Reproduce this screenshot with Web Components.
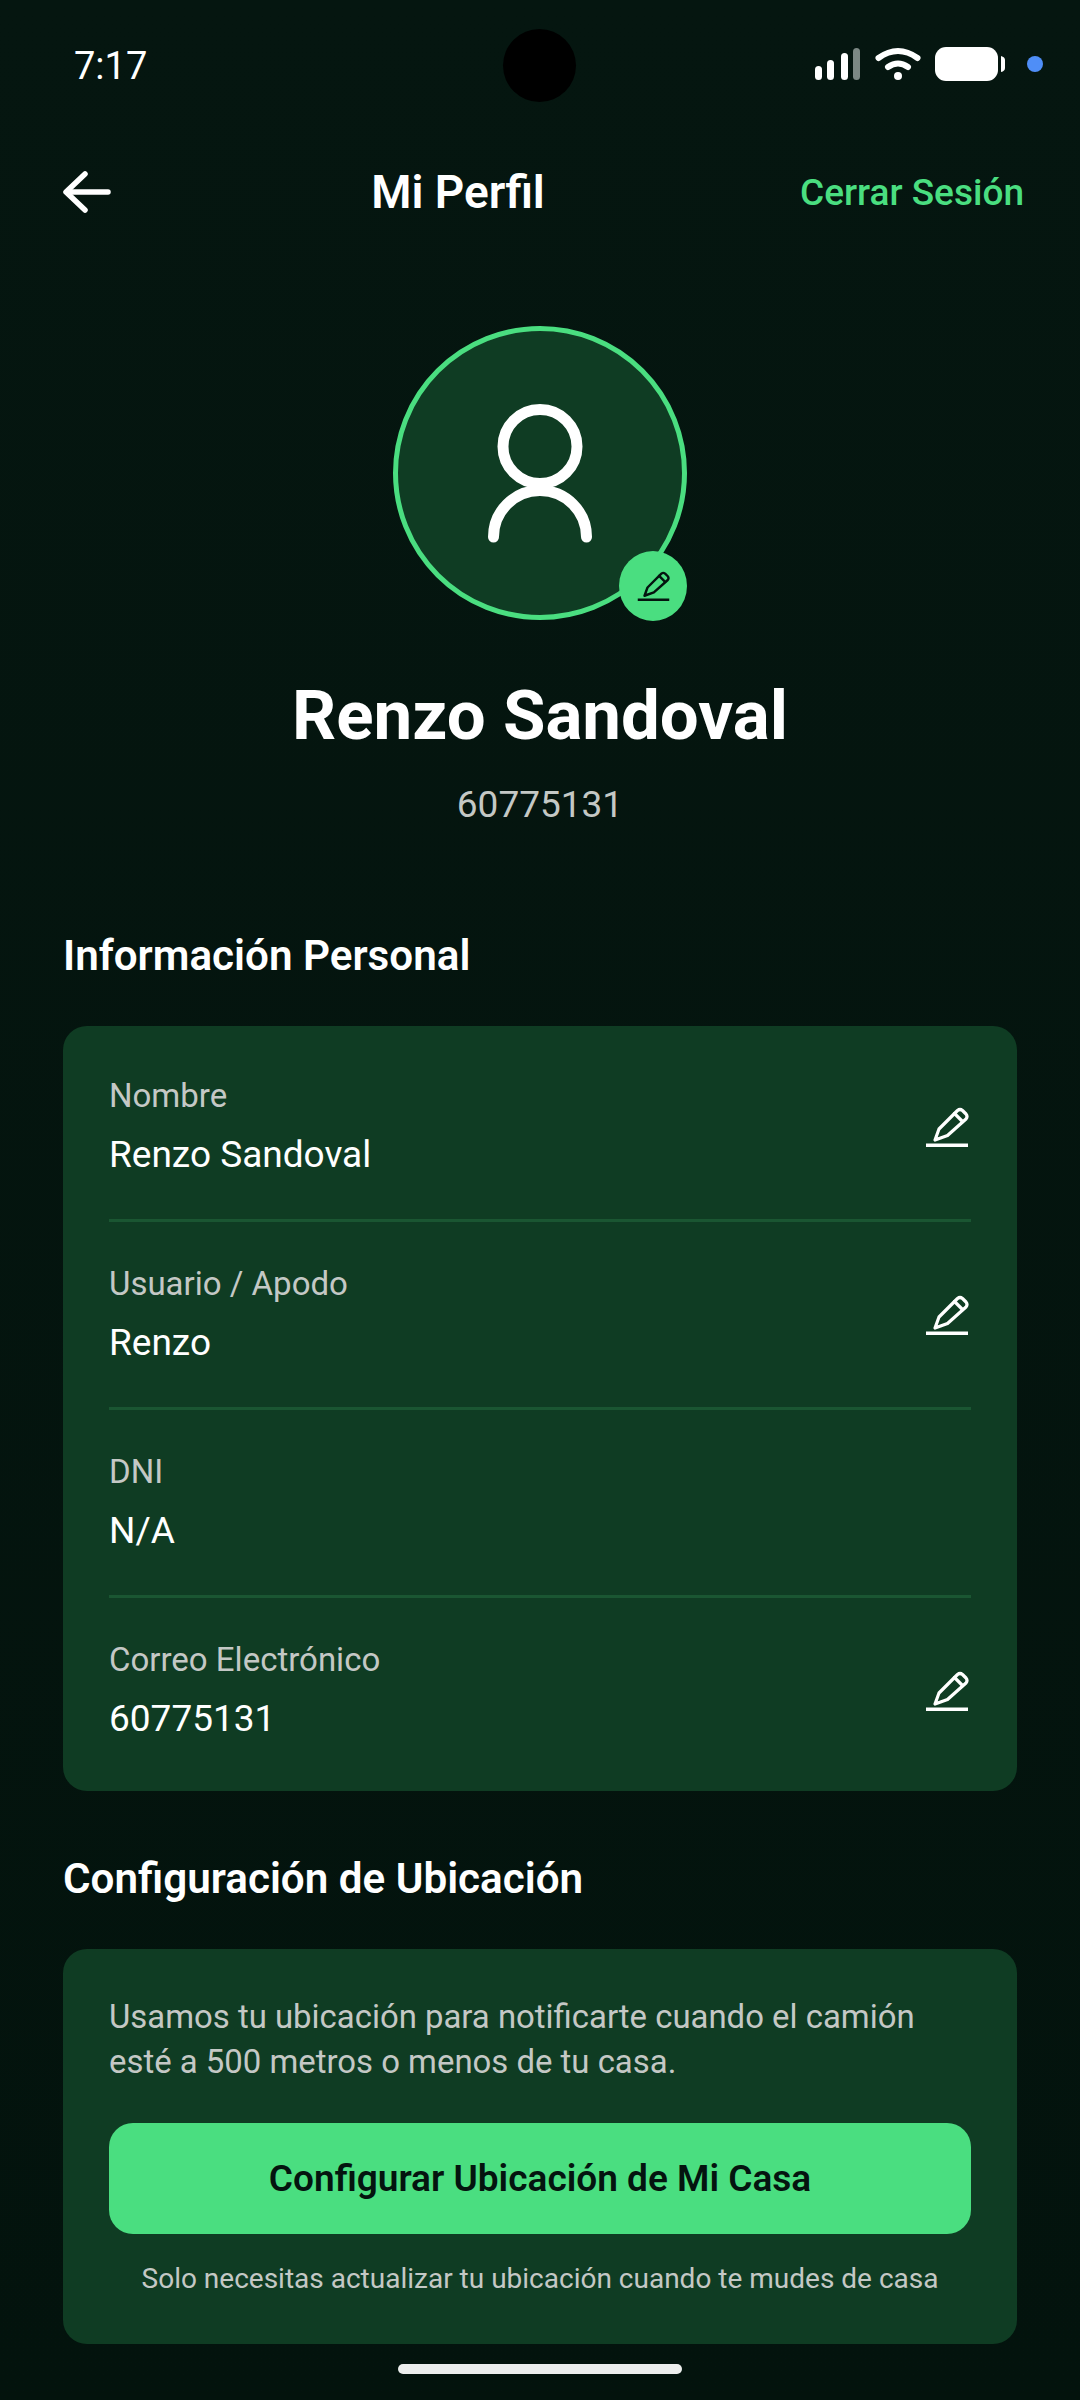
<!DOCTYPE html>
<html lang="es">
<head>
<meta charset="utf-8">
<title>Mi Perfil</title>
<style>
  html, body { margin: 0; padding: 0; background: #04140f; }
  body { font-family: Roboto, "Noto Sans", sans-serif; color: #fff; }
</style>
</head>
<body>
<x-profile-page>
  <x-status-bar time="7:17"></x-status-bar>
  <x-top-bar heading="Mi Perfil" action="Cerrar Sesión"></x-top-bar>
  <x-avatar name="Renzo Sandoval" code="60775131"></x-avatar>

  <x-section heading="Información Personal">
    <x-field label="Nombre" value="Renzo Sandoval" editable></x-field>
    <x-field label="Usuario / Apodo" value="Renzo" editable></x-field>
    <x-field label="DNI" value="N/A"></x-field>
    <x-field label="Correo Electrónico" value="60775131" editable last></x-field>
  </x-section>

  <x-section heading="Configuración de Ubicación">
    <x-location-box
      text="Usamos tu ubicación para notificarte cuando el camión esté a 500 metros o menos de tu casa."
      button="Configurar Ubicación de Mi Casa"
      hint="Solo necesitas actualizar tu ubicación cuando te mudes de casa"></x-location-box>
  </x-section>
  <x-home-bar></x-home-bar>
</x-profile-page>

<script>
const pencil = (color, width, size) => `
  <svg viewBox="0 0 44 40" width="${size}" height="${size * 40 / 44}" fill="none" stroke="${color}" stroke-width="${width}" stroke-linejoin="round" stroke-linecap="round">
    <path d="M10 33 L14 22 L32.5 3.5 Q35 1.5 37.5 3.5 L41 7 Q43 9.5 41 12 L22.5 28.5 Z"/>
    <path d="M29.5 6.5 L37.5 14.5"/>
    <path d="M1 38.5 H43" stroke-linecap="butt" stroke-width="${width + 0.6}"/>
  </svg>`

/** Page column: only sets the size of the screen. */
customElements.define('x-profile-page', class extends HTMLElement {
  constructor () {
    super()
    this.attachShadow({ mode: 'open' }).innerHTML = `
      <style>
        :host { display: block; width: 1080px; height: 2400px; overflow: hidden; background: linear-gradient(#051610, #03130d); }
      </style>
      <slot></slot>`
  }
})

customElements.define('x-status-bar', class extends HTMLElement {
  constructor () {
    super()
    this.attachShadow({ mode: 'open' }).innerHTML = `
      <style>
        :host { display: flex; position: relative; height: 130px; align-items: center; justify-content: space-between; padding: 0 36px 0 74px; }
        .time { font-size: 38px; color: #fff; padding-top: 2px; }
        .camera { position: absolute; left: 503px; top: 29px; width: 73px; height: 73px; border-radius: 50%; background: #000; }
        svg { display: block; }
      </style>
      <span class="time">${this.getAttribute('time')}</span>
      <span class="camera"></span>
      <svg width="229" height="36" viewBox="0 0 229 36">
        <g fill="#fff">
          <rect x="0" y="19" width="7" height="14" rx="3.5"/>
          <rect x="12" y="13" width="7" height="20" rx="3.5"/>
          <rect x="26" y="6" width="7" height="27" rx="3.5"/>
        </g>
        <rect x="38" y="1" width="7" height="32" rx="3.5" fill="#7c8884"/>
        <g fill="none" stroke="#fff" stroke-linecap="round">
          <path d="M63.5 11 Q83 -3 102.5 11" stroke-width="6"/>
          <path d="M73 20 Q83 13 93 20" stroke-width="6"/>
        </g>
        <circle cx="83" cy="29" r="4" fill="#fff"/>
        <rect x="120" y="0" width="63" height="34" rx="11" fill="#fff"/>
        <path d="M186 9 Q190 10 190 13 V21 Q190 24 186 25 Z" fill="#fff"/>
        <circle cx="220" cy="17" r="8" fill="#4f8ef7"/>
      </svg>`
  }
})

customElements.define('x-top-bar', class extends HTMLElement {
  constructor () {
    super()
    this.attachShadow({ mode: 'open' }).innerHTML = `
      <style>
        :host { display: flex; align-items: center; justify-content: space-between; height: 124px; padding: 0 56px 0 62px; }
        .back { width: 54px; }
        h1 { margin: 0; font-size: 46px; font-weight: 600; color: #fff; white-space: nowrap; }
        a { font-size: 37px; font-weight: 500; color: #4ade80; white-space: nowrap; }
        svg { display: block; }
      </style>
      <span class="back">
        <svg width="50" height="42" viewBox="0 0 50 42" fill="none" stroke="#fff" stroke-width="5.5" stroke-linecap="round" stroke-linejoin="round">
          <path d="M23 3 L4 21 L23 39"/><path d="M5 21 H46"/>
        </svg>
      </span>
      <h1>${this.getAttribute('heading')}</h1>
      <a>${this.getAttribute('action')}</a>`
  }
})

customElements.define('x-avatar', class extends HTMLElement {
  constructor () {
    super()
    this.attachShadow({ mode: 'open' }).innerHTML = `
      <style>
        :host { display: flex; flex-direction: column; align-items: center; padding: 72px 0 42px; }
        .circle { position: relative; box-sizing: border-box; width: 294px; height: 294px; border-radius: 50%; border: 5px solid #4ade80; background: #0f3c23; display: flex; align-items: center; justify-content: center; }
        .circle svg.user { display: block; }
        .badge { position: absolute; left: 221px; top: 220px; width: 68px; height: 70px; border-radius: 50%; background: #4ade80; display: flex; align-items: center; justify-content: center; }
        h2 { margin: 57px 0 0; font-size: 69px; line-height: 78px; font-weight: 700; color: #fff; white-space: nowrap; }
        p { margin: 29px 0 0; font-size: 37px; line-height: 42px; color: #c4c8c5; }
      </style>
      <div class="circle">
        <svg class="user" width="104" height="139" viewBox="0 0 104 139" fill="none" stroke="#fff" stroke-width="11" stroke-linecap="round">
          <circle cx="52" cy="42.5" r="37"/>
          <path d="M5.5 133 A46.5 46.5 0 0 1 98.5 133"/>
        </svg>
        <span class="badge">${pencil('#04140f', 3.2, 33)}</span>
      </div>
      <h2>${this.getAttribute('name')}</h2>
      <p>${this.getAttribute('code')}</p>`
  }
})

customElements.define('x-section', class extends HTMLElement {
  constructor () {
    super()
    this.attachShadow({ mode: 'open' }).innerHTML = `
      <style>
        :host { display: block; margin: 0 63px; padding-top: 64px; }
        h3 { margin: 0 0 46px; font-size: 42.2px; line-height: 48px; font-weight: 600; color: #fff; white-space: nowrap; }
        .card { background: #0f3c23; border-radius: 24px; padding: 0 46px; overflow: hidden; }
      </style>
      <h3>${this.getAttribute('heading')}</h3>
      <div class="card"><slot></slot></div>`
  }
})

customElements.define('x-field', class extends HTMLElement {
  constructor () {
    super()
    const edit = this.hasAttribute('editable') ? `<span class="edit">${pencil('#fff', 3.2, 44)}</span>` : ''
    this.attachShadow({ mode: 'open' }).innerHTML = `
      <style>
        :host { display: flex; align-items: center; justify-content: space-between; padding: 38px 0 40px; border-bottom: 3px solid #1a5632; }
        :host([last]) { border-bottom: 0; padding-bottom: 48px; }
        :host(:first-child) { padding-top: 46px; }
        .label { font-size: 33px; line-height: 48px; color: #c4c8c5; }
        .value { margin-top: 11px; font-size: 37px; line-height: 48px; color: #fff; }
        .edit { display: block; margin: 2px 2px 0 0; }
        svg { display: block; }
      </style>
      <div>
        <div class="label">${this.getAttribute('label')}</div>
        <div class="value">${this.getAttribute('value')}</div>
      </div>
      ${edit}`
  }
})

customElements.define('x-location-box', class extends HTMLElement {
  constructor () {
    super()
    this.attachShadow({ mode: 'open' }).innerHTML = `
      <style>
        :host { display: block; padding: 45px 0 47px; }
        p { margin: 0; font-size: 32.9px; line-height: 45px; color: #c4c8c5; }
        button { display: block; width: 100%; height: 111px; margin-top: 39px; padding: 0; border: 0; border-radius: 24px; background: #4ade80; color: #04140f; font: 600 37px Roboto, sans-serif; }
        small { display: block; margin-top: 27px; text-align: center; font-size: 28px; line-height: 36px; color: #c4c8c5; white-space: nowrap; }
      </style>
      <p>${this.getAttribute('text')}</p>
      <button>${this.getAttribute('button')}</button>
      <small>${this.getAttribute('hint')}</small>`
  }
})

customElements.define('x-home-bar', class extends HTMLElement {
  constructor () {
    super()
    this.attachShadow({ mode: 'open' }).innerHTML = `
      <style>
        :host { display: block; width: 284px; height: 10px; margin: 20px auto 0; border-radius: 5px; background: #eceeed; }
      </style>`
  }
})
</script>
</body>
</html>
